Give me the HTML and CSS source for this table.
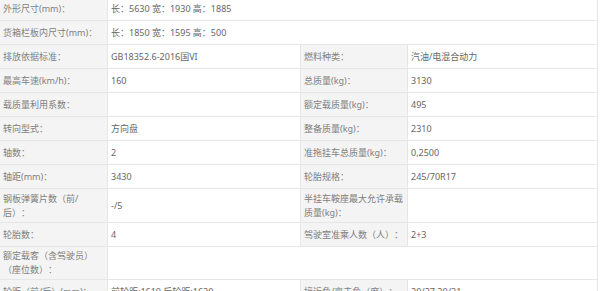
FILE: index.html
```html
<!DOCTYPE html>
<html lang="zh-CN">
<head>
<meta charset="utf-8">
<title>参数</title>
<link rel="stylesheet" href="styles.css">
</head>
<body>
<table class="spec">
  <colgroup>
    <col class="c-l1"><col class="c-v1"><col class="c-l2"><col class="c-v2">
  </colgroup>
  <tr><td class="lab">外形尺寸(mm)：</td><td class="val" colspan="3">长：5630 宽：1930 高：1885</td></tr>
  <tr><td class="lab">货箱栏板内尺寸(mm)：</td><td class="val" colspan="3">长：1850 宽：1595 高：500</td></tr>
  <tr><td class="lab">排放依据标准：</td><td class="val">GB18352.6-2016国VI</td><td class="lab">燃料种类：</td><td class="val">汽油/电混合动力</td></tr>
  <tr><td class="lab">最高车速(km/h)：</td><td class="val">160</td><td class="lab">总质量(kg)：</td><td class="val">3130</td></tr>
  <tr><td class="lab">载质量利用系数：</td><td class="val"></td><td class="lab">额定载质量(kg)：</td><td class="val">495</td></tr>
  <tr><td class="lab">转向型式：</td><td class="val">方向盘</td><td class="lab">整备质量(kg)：</td><td class="val">2310</td></tr>
  <tr><td class="lab">轴数：</td><td class="val">2</td><td class="lab">准拖挂车总质量(kg)：</td><td class="val">0,2500</td></tr>
  <tr><td class="lab">轴距(mm)：</td><td class="val">3430</td><td class="lab">轮胎规格：</td><td class="val">245/70R17</td></tr>
  <tr class="tall"><td class="lab">钢板弹簧片数（前/后）：</td><td class="val">-/5</td><td class="lab">半挂车鞍座最大允许承载质量(kg)：</td><td class="val"></td></tr>
  <tr><td class="lab">轮胎数：</td><td class="val">4</td><td class="lab">驾驶室准乘人数（人）：</td><td class="val">2+3</td></tr>
  <tr class="tall2"><td class="lab">额定载客（含驾驶员）（座位数）：</td><td class="val" colspan="3"></td></tr>
  <tr><td class="lab">轮距（前/后）(mm)：</td><td class="val">前轮距:1610 后轮距:1630</td><td class="lab">接近角/离去角（度）：</td><td class="val">20/27,20/21</td></tr>
</table>
</body>
</html>
```

FILE: styles.css
```css
html, body {
  margin: 0;
  padding: 0;
  background: #ffffff;
}

body {
  font-family: "Noto Sans", "Noto Sans CJK SC", sans-serif;
  font-size: 9px;
  color: #666666;
  text-spacing-trim: space-all;
}

.spec {
  border-collapse: collapse;
  table-layout: fixed;
  width: 598px;
  margin-top: -4px;
  margin-left: -1px;
}

.c-l1 { width: 108px; }
.c-v1 { width: 193px; }
.c-l2 { width: 107px; }
.c-v2 { width: 190px; }

.spec td {
  box-sizing: border-box;
  border: 1px solid #e6e6e6;
  height: 24px;
  padding: 0 3px;
  line-height: 14px;
  vertical-align: middle;
}

.spec tr.tall td {
  height: 34px;
}

.spec tr.tall2 td {
  height: 33px;
}

.spec .lab {
  background: #f4f4f4;
  color: #808080;
}

.spec .val {
  background: #ffffff;
  color: #666666;
}
```
